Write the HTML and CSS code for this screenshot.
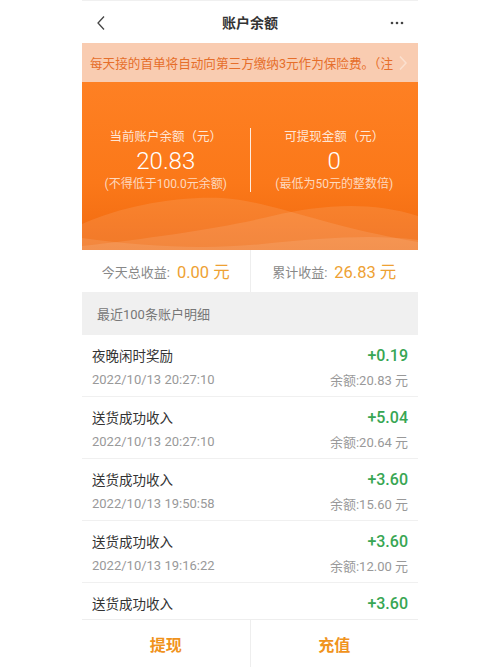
FILE: index.html
```html
<!DOCTYPE html>
<html lang="zh-CN">
<head>
<meta charset="UTF-8">
<meta name="viewport" content="width=device-width, initial-scale=1.0">
<title>账户余额</title>
<link rel="stylesheet" href="styles.css">
</head>
<body>

<div id="balance-page">
    <div class="nav-bar">
        <span class="nav-back">
            <svg width="10" height="16" viewBox="0 0 10 16"><path d="M8 1.5 L2 8 L8 14.5" fill="none" stroke="#444" stroke-width="1.3"/></svg>
        </span>
        <h1 class="nav-title">账户余额</h1>
        <span class="nav-more">
            <svg width="14" height="4" viewBox="0 0 14 4"><circle cx="2" cy="2" r="1.3" fill="#444"/><circle cx="7" cy="2" r="1.3" fill="#444"/><circle cx="12" cy="2" r="1.3" fill="#444"/></svg>
        </span>
    </div>

    <div class="notice">
        <span class="notice-text">每天接的首单将自动向第三方缴纳3元作为保险费。（注</span>
        <span class="notice-arrow">
            <svg width="10" height="16" viewBox="0 0 10 16"><path d="M2 1.5 L8 8 L2 14.5" fill="none" stroke="#fbe0cf" stroke-width="1.5"/></svg>
        </span>
    </div>

    <div class="balance-card">
        <div class="balance-cols">
            <div class="balance-col">
                <div class="balance-label">当前账户余额（元）</div>
                <div class="balance-value">20.83</div>
                <div class="balance-note">(不得低于100.0元余额)</div>
            </div>
            <div class="balance-col">
                <div class="balance-label">可提现金额（元）</div>
                <div class="balance-value">0</div>
                <div class="balance-note">(最低为50元的整数倍)</div>
            </div>
        </div>
        <svg class="balance-wave" width="336" height="56" viewBox="0 0 336 56" preserveAspectRatio="none">
            <path d="M0 30 C40 12 95 2 140 4 C190 7 240 32 336 48 L336 56 L0 56 Z" fill="rgba(255,255,255,0.10)"/>
            <path d="M0 52 C70 44 140 34 190 22 C235 12 285 6 336 22 L336 56 L0 56 Z" fill="rgba(255,255,255,0.10)"/>
            <path d="M0 44 C60 52 120 56 180 50 C240 44 290 40 336 46 L336 56 L0 56 Z" fill="rgba(255,255,255,0.10)"/>
        </svg>
    </div>

    <div class="income-row">
        <div class="income-cell"><span class="income-label">今天总收益:</span><span class="income-value">0.00 元</span></div>
        <div class="income-cell"><span class="income-label">累计收益:</span><span class="income-value">26.83 元</span></div>
    </div>

    <div class="section-head">最近100条账户明细</div>

    <div class="record-list">
        <div class="record">
            <div class="record-line"><span class="record-title">夜晚闲时奖励</span><span class="record-amount">+0.19</span></div>
            <div class="record-line"><span class="record-time">2022/10/13 20:27:10</span><span class="record-balance">余额:20.83 元</span></div>
        </div>
        <div class="record">
            <div class="record-line"><span class="record-title">送货成功收入</span><span class="record-amount">+5.04</span></div>
            <div class="record-line"><span class="record-time">2022/10/13 20:27:10</span><span class="record-balance">余额:20.64 元</span></div>
        </div>
        <div class="record">
            <div class="record-line"><span class="record-title">送货成功收入</span><span class="record-amount">+3.60</span></div>
            <div class="record-line"><span class="record-time">2022/10/13 19:50:58</span><span class="record-balance">余额:15.60 元</span></div>
        </div>
        <div class="record">
            <div class="record-line"><span class="record-title">送货成功收入</span><span class="record-amount">+3.60</span></div>
            <div class="record-line"><span class="record-time">2022/10/13 19:16:22</span><span class="record-balance">余额:12.00 元</span></div>
        </div>
        <div class="record">
            <div class="record-line"><span class="record-title">送货成功收入</span><span class="record-amount">+3.60</span></div>
        </div>
    </div>

    <div class="action-bar">
        <button class="action-btn">提现</button>
        <button class="action-btn">充值</button>
    </div>
</div>

</body>
</html>
```

FILE: styles.css
```css
body {
    font-family: Roboto, "Noto Sans CJK SC", sans-serif;
    margin: 0;
    padding: 0;
    background: #fff;
}
#balance-page {
    width: 336px;
    height: 667px;
    margin: 0 auto;
    display: flex;
    flex-direction: column;
    overflow: hidden;
    border-top: 1px solid #f0f0f0;
    box-sizing: border-box;
}
.nav-bar {
    height: 42px;
    display: flex;
    align-items: center;
    justify-content: space-between;
    padding: 0 14px 0 14px;
    flex-shrink: 0;
}
.nav-back {
    width: 20px;
    display: flex;
    padding-top: 2px;
}
.nav-more {
    width: 20px;
    display: flex;
    justify-content: flex-end;
    padding-top: 2px;
}
.nav-title {
    margin: 0;
    font-size: 14px;
    font-weight: bold;
    color: #333;
}
.notice {
    height: 39px;
    background: #f9ccb1;
    display: flex;
    align-items: center;
    justify-content: space-between;
    padding: 0 10px 0 8px;
    flex-shrink: 0;
}
.notice-text {
    white-space: nowrap;
    font-size: 12.6px;
    color: #e66e2a;
}
.notice-arrow {
    display: flex;
    margin-left: -4px;
}
.balance-card {
    height: 168px;
    background: linear-gradient(180deg, #fe8023 0%, #fb7819 60%, #f06a10 100%);
    position: relative;
    flex-shrink: 0;
    overflow: hidden;
}
.balance-cols {
    display: flex;
    padding-top: 46px;
}
.balance-col {
    flex: 1;
    text-align: center;
    color: #fff;
}
.balance-col + .balance-col {
    border-left: 1.5px solid rgba(255, 255, 255, 0.85);
}
.balance-label {
    font-size: 12.5px;
    line-height: 18px;
    color: rgba(255, 255, 255, 0.82);
}
.balance-value {
    font-size: 24px;
    font-weight: 300;
    line-height: 30px;
}
.balance-note {
    font-size: 12px;
    line-height: 16px;
    color: rgba(255, 255, 255, 0.72);
}
.balance-wave {
    position: absolute;
    left: 0;
    bottom: 0;
    display: block;
}
.income-row {
    height: 42px;
    display: flex;
    flex-shrink: 0;
}
.income-cell {
    flex: 1;
    display: flex;
    align-items: center;
    justify-content: center;
    gap: 7px;
}
.income-cell + .income-cell {
    border-left: 1px solid #eee;
}
.income-label {
    font-size: 13px;
    color: #888;
}
.income-value {
    font-size: 16.5px;
    color: #eea133;
}
.section-head {
    height: 43px;
    background: #f0f0f0;
    display: flex;
    align-items: center;
    padding-left: 15px;
    font-size: 13px;
    color: #777;
    flex-shrink: 0;
}
.record-list {
    flex: 1;
    overflow: hidden;
}
.record {
    padding: 8px 10px 5px 10px;
    border-bottom: 1px solid #f0f0f0;
}
.record-line {
    display: flex;
    justify-content: space-between;
    align-items: center;
    height: 24px;
}
.record-title {
    font-size: 13.5px;
    color: #333;
}
.record-amount {
    font-size: 16px;
    font-weight: 500;
    color: #38a653;
}
.record-time {
    font-size: 13px;
    color: #999;
}
.record-balance {
    font-size: 13px;
    color: #999;
}
.action-bar {
    height: 47px;
    display: flex;
    border-top: 1px solid #eee;
    flex-shrink: 0;
    background: #fff;
}
.action-btn {
    flex: 1;
    background: none;
    border: none;
    font-family: inherit;
    font-size: 16px;
    font-weight: bold;
    color: #f0931c;
    cursor: pointer;
}
.action-btn + .action-btn {
    border-left: 1px solid #eee;
}
```
